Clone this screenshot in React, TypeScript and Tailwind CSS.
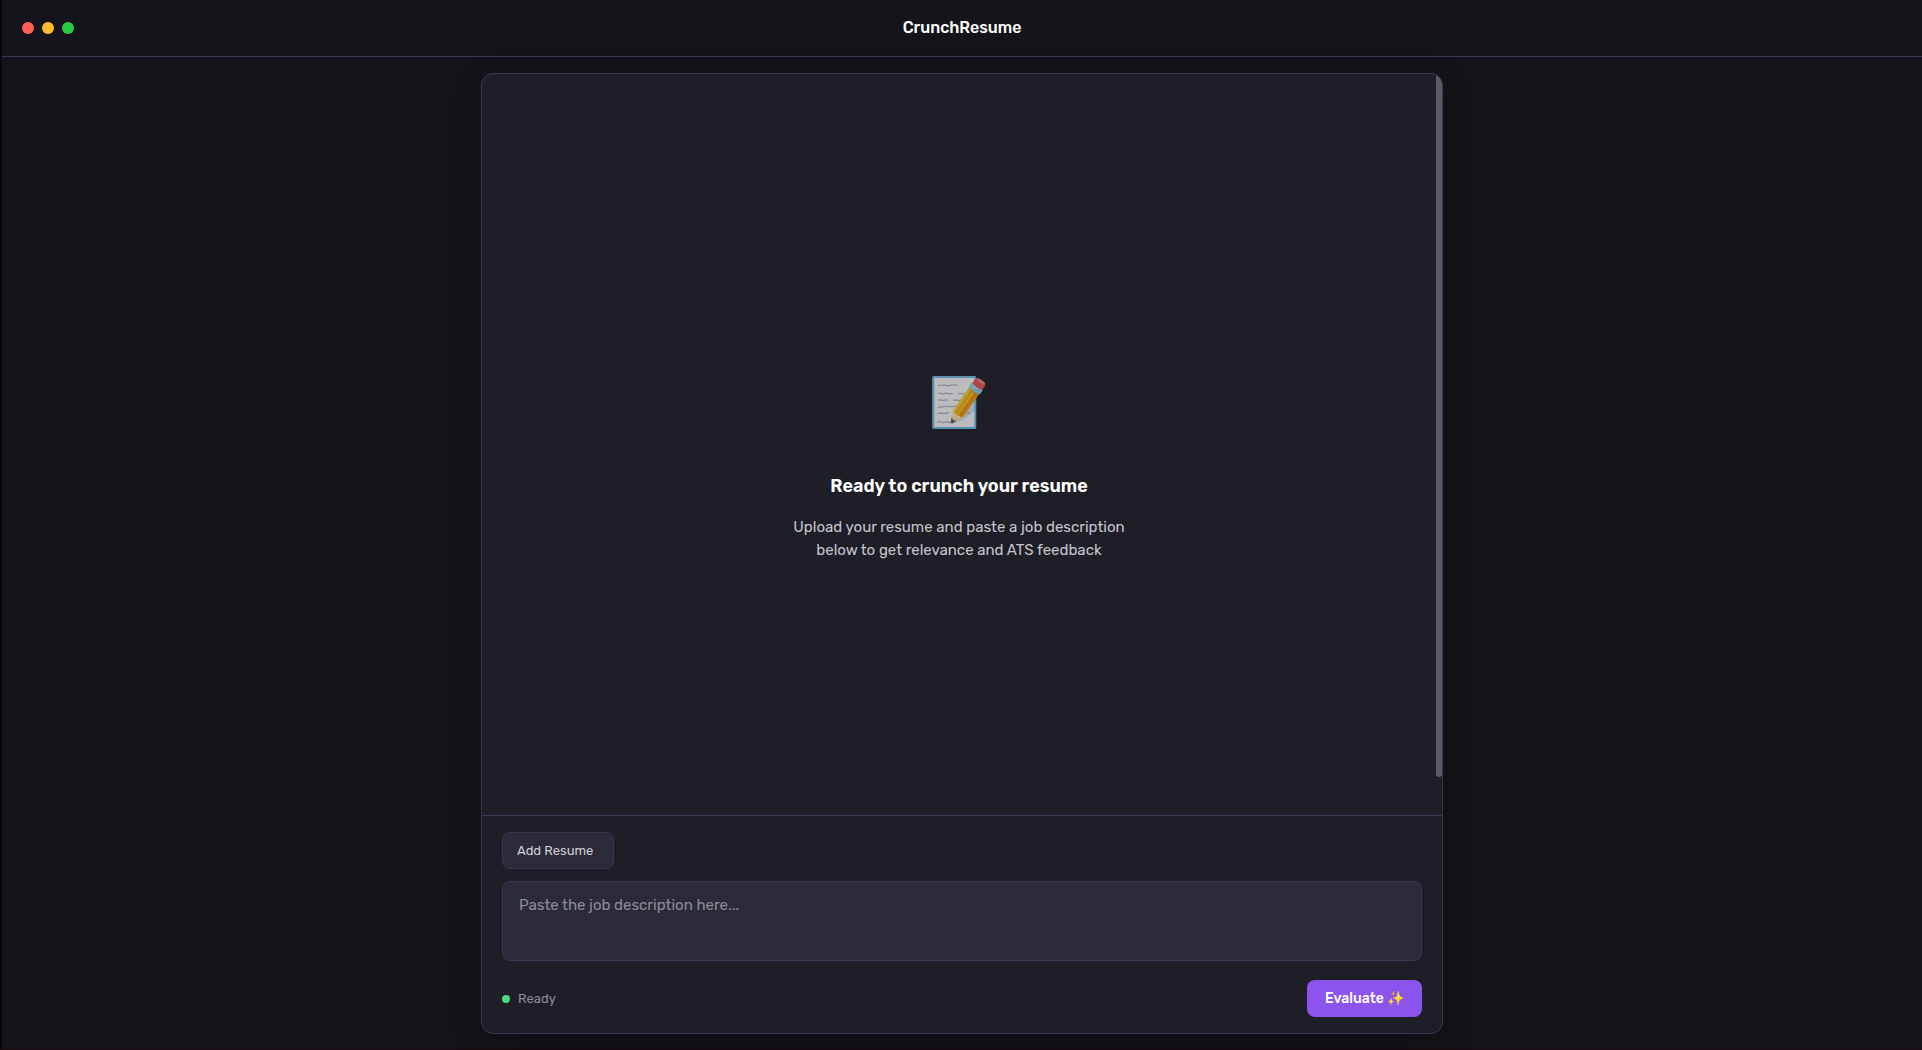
import React, { useState } from 'react'

function TitleBar() {
  return (
    <header className="grid h-[57px] shrink-0 grid-cols-[1fr_auto_1fr] items-center border-b border-[#3a3654] bg-[#15141a] px-5">
      <div className="flex gap-2">
        <button type="button" aria-label="Close" className="size-3 rounded-full bg-[#ff5f57]" />
        <button type="button" aria-label="Minimize" className="size-3 rounded-full bg-[#ffbd2e]" />
        <button type="button" aria-label="Maximize" className="size-3 rounded-full bg-[#28ca42]" />
      </div>
      <h1 className="text-base font-medium text-white">CrunchResume</h1>
    </header>
  )
}

function EmptyState() {
  return (
    <div className="flex min-h-0 flex-1">
      <div className="flex-1 overflow-y-auto [scrollbar-width:none]">
        <div className="flex min-h-full flex-col items-center justify-center pt-10 text-center">
          <div className="mb-[34px] text-5xl leading-[70px] opacity-70">📝</div>
          <h2 className="mb-4 text-lg leading-7 font-semibold text-white">Ready to crunch your resume</h2>
          <p className="max-w-[360px] text-[15px] leading-[23px] text-[#c4c4cc]">
            Upload your resume and paste a job description below to get relevance and ATS feedback
          </p>
        </div>
      </div>
      <div className="w-1.5 shrink-0 pb-[38px]" aria-hidden="true">
        <div className="h-full rounded-full bg-[#5b5965]" />
      </div>
    </div>
  )
}

function Composer() {
  const [description, setDescription] = useState('')
  return (
    <form
      className="flex shrink-0 flex-col border-t border-[#3a3654] px-5 py-4"
      onSubmit={(event) => event.preventDefault()}
    >
      <button
        type="button"
        className="mb-3 flex h-[37px] w-28 items-center self-start rounded-lg border border-[#3a3654] bg-[#2b2a38] px-3.5 text-[13px] text-[#cfcfd6]"
      >
        Add Resume
      </button>
      <textarea
        aria-label="Job description"
        className="mb-[19px] block h-20 w-full resize-none rounded-lg border border-[#3a3654] bg-[#2b2a38] px-4 py-3 text-[15px] leading-[23px] text-white outline-none placeholder:text-[#8d8c98]"
        placeholder="Paste the job description here..."
        value={description}
        onChange={(event) => setDescription(event.target.value)}
      />
      <div className="flex items-center justify-between">
        <div className="flex items-center gap-2 text-[13px] text-[#8d8c98]">
          <span className="size-2 rounded-full bg-[#48db8a]" />
          <span>Ready</span>
        </div>
        <button
          type="submit"
          className="flex h-[37px] w-[115px] items-center justify-center rounded-lg bg-[#8b54ed] text-sm font-medium whitespace-pre text-white"
        >
          Evaluate ✨
        </button>
      </div>
    </form>
  )
}

export default function App() {
  return (
    <div className="flex h-screen flex-col border-b border-l-2 border-b-[#1a0d14] border-l-[#08080a] bg-[#15141a] font-[Rubik,sans-serif]">
      <TitleBar />
      <main className="flex min-h-0 flex-1 justify-center px-4 pt-4 pb-[15px]">
        <section className="flex w-full max-w-[962px] flex-col overflow-hidden rounded-xl border border-[#3a3654] bg-[#1e1e26] shadow-[0_8px_32px_rgba(0,0,0,0.3)]">
          <EmptyState />
          <Composer />
        </section>
      </main>
    </div>
  )
}
